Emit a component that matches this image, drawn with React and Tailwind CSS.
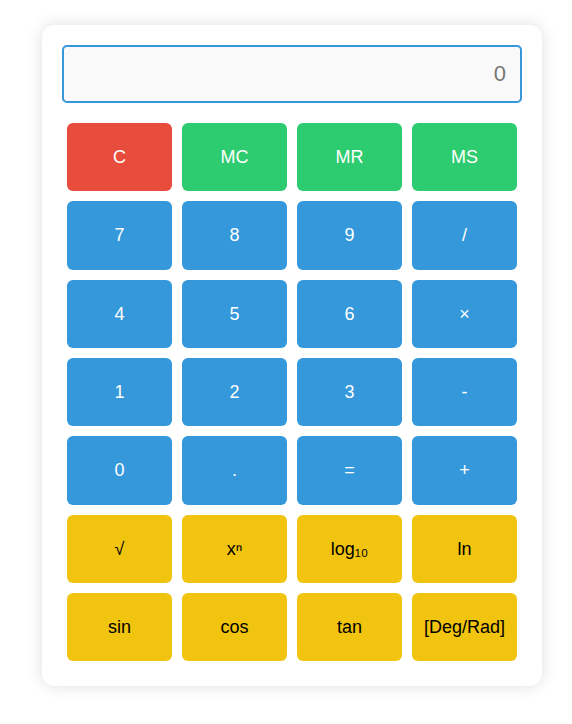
import React, { useState } from "react";

const rows = [
  [
    { label: "C", kind: "red" },
    { label: "MC", kind: "green" },
    { label: "MR", kind: "green" },
    { label: "MS", kind: "green" },
  ],
  [
    { label: "7" },
    { label: "8" },
    { label: "9" },
    { label: "/" },
  ],
  [
    { label: "4" },
    { label: "5" },
    { label: "6" },
    { label: "×" },
  ],
  [
    { label: "1" },
    { label: "2" },
    { label: "3" },
    { label: "-" },
  ],
  [
    { label: "0" },
    { label: "." },
    { label: "=" },
    { label: "+" },
  ],
  [
    { label: "√", kind: "yellow" },
    { label: "xⁿ", kind: "yellow" },
    { label: "log₁₀", kind: "yellow" },
    { label: "ln", kind: "yellow" },
  ],
  [
    { label: "sin", kind: "yellow" },
    { label: "cos", kind: "yellow" },
    { label: "tan", kind: "yellow" },
    { label: "[Deg/Rad]", kind: "yellow" },
  ],
];

const colors = {
  red: "bg-[#e74c3c] text-white",
  green: "bg-[#2ecc71] text-white",
  blue: "bg-[#3498db] text-white",
  yellow: "bg-[#f1c40f] text-black",
};

const App = () => {
  const [value] = useState("0");

  return (
    <div className="min-h-screen bg-white pt-[25px] pl-[42px] font-['Liberation_Sans',Arial,sans-serif]">
      <div className="w-[500px] rounded-xl bg-white p-5 shadow-[0_0_16px_rgba(0,0,0,0.13)]">
        {/* Display */}
        <input
          readOnly
          value={value}
          className="mb-[15px] h-[58px] w-full rounded-[5px] border-2 border-[#3498db] bg-[#f9f9f9] px-[14px] text-right text-[22px] text-[#777] outline-none"
        />

        {/* Keys */}
        <div className="grid grid-cols-4">
          {rows.flat().map((key, i) => (
            <button
              key={i}
              className={`m-[5px] flex h-[68.33px] items-center justify-center rounded-[6px] text-lg ${colors[key.kind || "blue"]}`}
            >
              {key.label}
            </button>
          ))}
        </div>
      </div>
    </div>
  );
};

export default App;
